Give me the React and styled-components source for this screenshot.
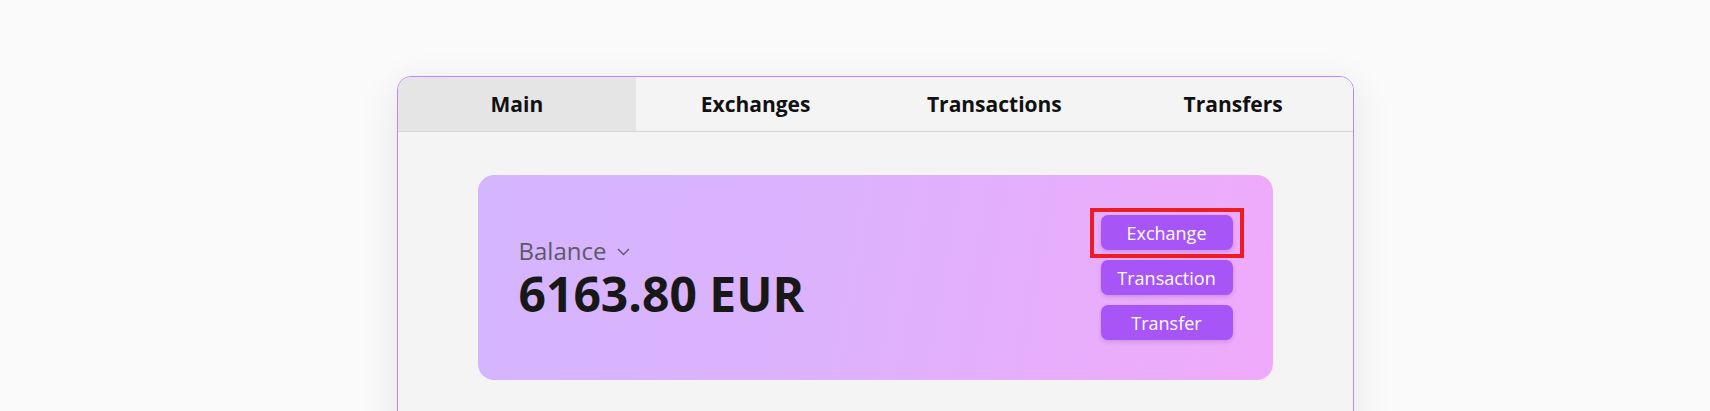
import React from 'react';
import styled, { createGlobalStyle } from 'styled-components';

const GlobalStyle = createGlobalStyle`
    html, body {
        margin: 0;
        background: #fafafa;
        font-family: "Open Sans", "Liberation Sans", sans-serif;
        overflow: hidden;
    }
`;

const Page = styled.div`
    padding: 76px 0 0 40px;
    min-height: 100vh;
    box-sizing: border-box;
`;

const Panel = styled.div`
    width: 957px;
    margin: 0 auto;
    box-sizing: border-box;
    border: 1px solid #c084fc;
    border-radius: 14px;
    background: #f4f4f4;
    box-shadow: 0 10px 40px rgba(0, 0, 0, 0.09);
    overflow: hidden;
`;

const TabBar = styled.div`
    display: grid;
    grid-template-columns: repeat(4, 1fr);
    height: 54px;
    border-bottom: 1px solid #d6d6d6;
`;

const Tab = styled.div`
    display: flex;
    align-items: center;
    justify-content: center;
    font-size: 21px;
    font-weight: 700;
    color: #111;
    background: ${p => (p.active ? '#e5e5e5' : '#f4f4f4')};
    cursor: pointer;
`;

const Content = styled.div`
    padding: 43px 80px 120px;
`;

const BalanceCard = styled.div`
    height: 205px;
    border-radius: 16px;
    background: linear-gradient(100deg, #d4b5fe 0%, #ddb2fd 45%, #f0aafb 100%);
    display: flex;
    align-items: center;
    justify-content: space-between;
    padding: 0 40px 0 41px;
`;

const Info = styled.div`
    display: flex;
    flex-direction: column;
    gap: 5px;
`;

const Label = styled.div`
    display: flex;
    align-items: center;
    gap: 11px;
    font-size: 24px;
    line-height: 1.2;
    color: #5e5868;
`;

const Amount = styled.div`
    font-size: 48px;
    line-height: 1;
    font-weight: 700;
    color: #181818;
`;

const Actions = styled.div`
    display: flex;
    flex-direction: column;
    gap: 10px;
`;

const Highlight = styled.div`
    position: relative;
    &::after {
        content: '';
        position: absolute;
        top: -7px;
        left: -11px;
        right: -11px;
        bottom: -8px;
        border: 4px solid #ed1c24;
        pointer-events: none;
    }
`;

const ActionButton = styled.button`
    display: block;
    width: 132px;
    height: 35px;
    border: none;
    border-radius: 7px;
    background: #a855f7;
    color: #fff;
    font-family: inherit;
    font-size: 18px;
    box-shadow: 0 2px 4px rgba(80, 20, 120, 0.18);
    cursor: pointer;
`;

const Chevron = () => (
    <svg width="13" height="8" viewBox="0 0 13 8" fill="none" style={{ marginTop: 2 }}>
        <path d="M1 1l5.5 5.5L12 1" stroke="#5e5868" strokeWidth="1.4" />
    </svg>
);

const tabs = ['Main', 'Exchanges', 'Transactions', 'Transfers'];

const App = () => {
    return (
        <>
            <GlobalStyle />
            <Page>
                <Panel>
                    <TabBar>
                        {tabs.map((t, i) => (
                            <Tab key={t} active={i === 0}>{t}</Tab>
                        ))}
                    </TabBar>
                    <Content>
                        <BalanceCard>
                            <Info>
                                <Label>Balance <Chevron /></Label>
                                <Amount>6163.80 EUR</Amount>
                            </Info>
                            <Actions>
                                <Highlight>
                                    <ActionButton>Exchange</ActionButton>
                                </Highlight>
                                <ActionButton>Transaction</ActionButton>
                                <ActionButton>Transfer</ActionButton>
                            </Actions>
                        </BalanceCard>
                    </Content>
                </Panel>
            </Page>
        </>
    );
};

export default App;
